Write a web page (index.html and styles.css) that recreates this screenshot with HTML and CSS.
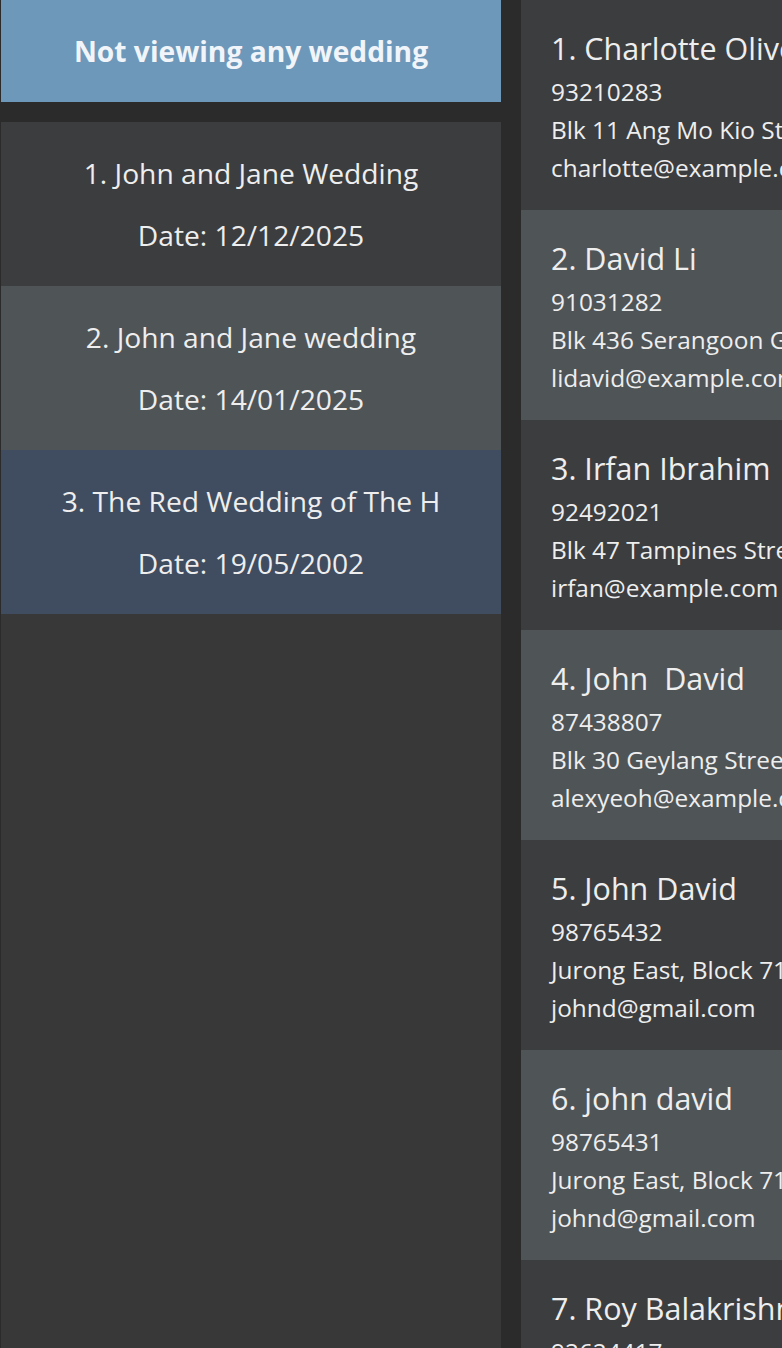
FILE: index.html
```html
<!DOCTYPE html>
<html>
<head>
<meta charset="utf-8">
<link rel="stylesheet" href="styles.css">
</head>
<body>
<div class="app">
  <div class="left">
    <div class="header">Not viewing any wedding</div>
    <div class="wlist">
      <div class="witem odd"><div class="wline">1. John and Jane Wedding</div><div class="wline">Date: 12/12/2025</div></div>
      <div class="witem even"><div class="wline">2. John and Jane wedding</div><div class="wline">Date: 14/01/2025</div></div>
      <div class="witem selected"><div class="wline">3. The Red Wedding of The H</div><div class="wline">Date: 19/05/2002</div></div>
    </div>
  </div>
  <div class="right">
    <div class="pitem odd"><div class="pname">1. Charlotte Oliveiro</div><div class="pline">93210283</div><div class="pline">Blk 11 Ang Mo Kio Street 74, #11-04</div><div class="pline">charlotte@example.com</div></div>
    <div class="pitem even"><div class="pname">2. David Li</div><div class="pline">91031282</div><div class="pline">Blk 436 Serangoon Gardens Street 26, #16-43</div><div class="pline">lidavid@example.com</div></div>
    <div class="pitem odd"><div class="pname">3. Irfan Ibrahim</div><div class="pline">92492021</div><div class="pline">Blk 47 Tampines Street 20, #17-35</div><div class="pline">irfan@example.com</div></div>
    <div class="pitem even"><div class="pname">4. John&nbsp; David</div><div class="pline">87438807</div><div class="pline">Blk 30 Geylang Street 29, #06-40</div><div class="pline">alexyeoh@example.com</div></div>
    <div class="pitem odd"><div class="pname">5. John David</div><div class="pline">98765432</div><div class="pline">Jurong East, Block 711, #04-04</div><div class="pline">johnd@gmail.com</div></div>
    <div class="pitem even"><div class="pname">6. john david</div><div class="pline">98765431</div><div class="pline">Jurong East, Block 711, #04-04</div><div class="pline">johnd@gmail.com</div></div>
    <div class="pitem odd"><div class="pname">7. Roy Balakrishnan</div><div class="pline">92624417</div><div class="pline">Blk 45 Aljunied Street 85, #11-31</div><div class="pline">royb@example.com</div></div>
  </div>
</div>
</body>
</html>
```
FILE: styles.css
```css
html, body {
  margin: 0;
  padding: 0;
  height: 100%;
  background: #2b2b2b;
  overflow: hidden;
}
.app {
  display: flex;
  gap: 20px;
  height: 1348px;
  padding-left: 1px;
  font-family: "Open Sans", "Noto Sans", sans-serif;
  color: #eeeeee;
}
.left {
  width: 500px;
  display: flex;
  flex-direction: column;
  gap: 20px;
  flex-shrink: 0;
}
.header {
  height: 102px;
  background: #6e98b9;
  color: #f1f5fa;
  font-weight: 700;
  font-size: 28.2px;
  display: flex;
  align-items: center;
  justify-content: center;
}
.wlist {
  flex: 1;
  background: #383838;
}
.witem {
  height: 164px;
  display: flex;
  flex-direction: column;
  justify-content: center;
  align-items: center;
  font-size: 28.2px;
  white-space: nowrap;
}
.wline {
  line-height: 62px;
}
.odd { background: #3c3d3f; }
.even { background: #4f5457; }
.selected { background: #404c5f; }
.right {
  flex: 1;
  overflow: hidden;
  white-space: nowrap;
}
.pitem {
  height: 210px;
  box-sizing: border-box;
  padding: 23px 0 0 30px;
}
.pname {
  font-size: 30.5px;
  line-height: 50px;
}
.pline {
  font-size: 24.4px;
  line-height: 38px;
}
```
